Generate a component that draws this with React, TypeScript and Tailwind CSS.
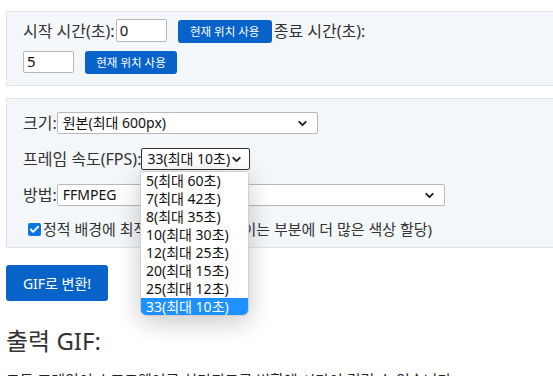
import { ChevronDown, Check } from "lucide-react";

const fps = [
  "5(최대 60초)",
  "7(최대 42초)",
  "8(최대 35초)",
  "10(최대 30초)",
  "12(최대 25초)",
  "20(최대 15초)",
  "25(최대 12초)",
  "33(최대 10초)",
];

function Select({ value, width, focused }: { value: string; width: string; focused?: boolean }) {
  return (
    <div
      className={`${width} h-[22px] bg-white flex items-center justify-between pl-[5px] pr-[8px] rounded-[2px] border ${
        focused ? "border-[#333]" : "border-[#b8b8b8]"
      }`}
    >
      <span className="text-[14px] leading-none whitespace-nowrap text-[#111]">{value}</span>
      <ChevronDown className="w-[13px] h-[13px] text-[#222] shrink-0" strokeWidth={3.5} />
    </div>
  );
}

function PosButton({ width }: { width: string }) {
  return (
    <button className={`${width} h-[23px] bg-[#0863c9] text-white text-[11.5px] rounded-[3px] leading-none whitespace-nowrap`}>
      현재 위치 사용
    </button>
  );
}

export default function App() {
  return (
    <div
      className="w-[553px] h-[376px] overflow-hidden bg-white text-[#333] relative"
      style={{ fontFamily: '"Noto Sans", "Noto Sans CJK KR", sans-serif' }}
    >
      <div className="pt-[11px] pl-[6px]">
        {/* time range */}
        <div className="w-[560px] h-[75px] bg-[#f4f7fa] border border-[#e1e5ea] pl-[16px] pt-[7px]">
          <div className="flex items-center h-[23px]">
            <span className="text-[16px] leading-none">시작 시간(초):</span>
            <div className="ml-[1px] w-[51px] h-[23px] bg-white border border-[#b8b8b8] rounded-[2px] flex items-center pl-[3px] text-[15px] text-[#111]">0</div>
            <div className="ml-[11px]">
              <PosButton width="w-[94px]" />
            </div>
            <span className="ml-[2px] text-[16px] leading-none">종료 시간(초):</span>
          </div>
          <div className="flex items-center h-[23px] mt-[8px]">
            <div className="w-[51px] h-[22px] bg-white border border-[#b8b8b8] rounded-[2px] flex items-center pl-[3px] text-[15px] text-[#111]">5</div>
            <div className="ml-[11px]">
              <PosButton width="w-[92px]" />
            </div>
          </div>
        </div>

        {/* options */}
        <div className="mt-[12px] w-[560px] h-[150px] bg-[#f4f7fa] border border-[#e1e5ea] pl-[16px] pt-[13px] flex flex-col gap-[14px]">
          <div className="flex items-center">
            <span className="text-[16px] leading-none">크기:</span>
            <Select value="원본(최대 600px)" width="w-[261px]" />
          </div>
          <div className="flex items-center">
            <span className="text-[16px] leading-none">프레임 속도(FPS):</span>
            <Select value="33(최대 10초)" width="w-[109px]" focused />
          </div>
          <div className="flex items-center">
            <span className="text-[16px] leading-none">방법:</span>
            <Select value="FFMPEG" width="w-[388px]" />
          </div>
          <div className="flex items-center pl-[5px] mt-[2px]">
            <span className="w-[13px] h-[13px] rounded-[2px] bg-[#0b75e0] flex items-center justify-center">
              <Check className="w-[11px] h-[11px] text-white" strokeWidth={4} />
            </span>
            <span className="ml-[2px] text-[15px] leading-none whitespace-nowrap">
              정적 배경에 최적화 (실제로 움직이는 부분에 더 많은 색상 할당)
            </span>
          </div>
        </div>

        <button className="mt-[17px] w-[102px] h-[36px] bg-[#0863c9] text-white text-[14px] rounded-[3px]">
          GIF로 변환!
        </button>

        <h2 className="mt-[28px] text-[24px] leading-none text-[#333]">출력 GIF:</h2>
        <p className="mt-[20px] text-[15px] leading-none whitespace-nowrap text-[#222]">
          모든 프레임이 소프트웨어로 처리되므로 변환에 시간이 걸릴 수 있습니다.
        </p>
      </div>

      {/* open dropdown */}
      <div className="absolute left-[140px] top-[171px] w-[109px] h-[145px] bg-white rounded-b-[6px] rounded-t-[3px] border border-[#d0d0d0] shadow-[0_6px_24px_rgba(0,0,0,0.22)] overflow-hidden">
        {fps.map((f, i) => (
          <div
            key={f}
            className={`h-[18px] pl-[5px] flex items-center text-[14px] leading-none whitespace-nowrap ${
              i === fps.length - 1 ? "bg-[#1e90ff] text-white" : "text-[#111]"
            }`}
          >
            {f}
          </div>
        ))}
      </div>
    </div>
  );
}
